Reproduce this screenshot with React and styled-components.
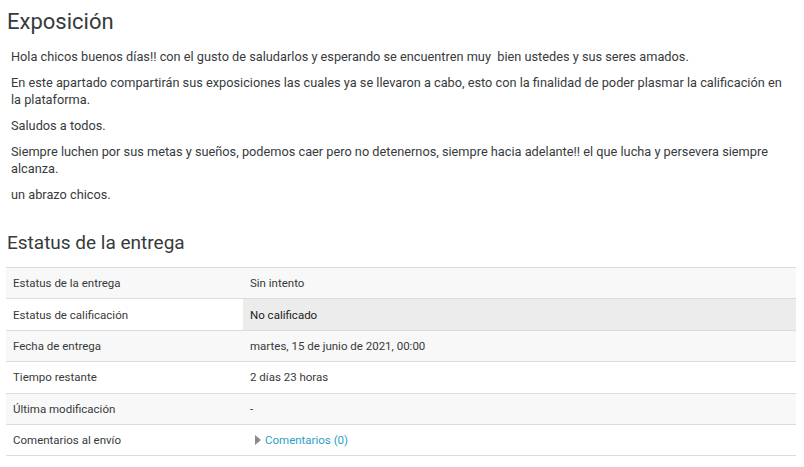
import React from "react";
import styled, { createGlobalStyle } from "styled-components";

const Global = createGlobalStyle`
  html, body { margin: 0; padding: 0; background: #fff; }
  body { font-family: Roboto, "Noto Sans", sans-serif; color: #373a3c; }
`;

const Page = styled.div`
  padding: 6px 8px 0 6px;
`;

const Title = styled.h2`
  margin: 0 0 0 1px;
  font-size: 22px;
  font-weight: 400;
  line-height: 32px;
  color: #373a3c;
`;

const Intro = styled.div`
  padding: 10px 12px 0 5px;
`;

const Para = styled.p`
  margin: 0 0 9px 0;
  font-size: 12.75px;
  line-height: 17px;
`;

const SectionTitle = styled.h3`
  margin: 27px 0 0 1px;
  font-size: 19px;
  font-weight: 400;
  line-height: 26px;
  color: #373a3c;
`;

const Table = styled.div`
  margin-top: 11px;
  width: 790px;
  display: grid;
  grid-template-columns: 237px 1fr;
  border-top: 1px solid #dcdcdc;
`;

const Cell = styled.div`
  height: 30.4px;
  display: flex;
  align-items: center;
  padding: 0 7px;
  font-size: 11.5px;
  border-bottom: 1px solid #dcdcdc;
  background: ${(p) => (p.$shade === "dark" ? "#ececec" : p.$shade === "light" ? "#f8f8f8" : "#fff")};
  color: ${(p) => (p.$strong ? "#222" : "#373a3c")};
`;

const LinkWrap = styled.span`
  display: inline-flex;
  align-items: center;
  gap: 4px;
  margin-left: 5px;
`;

const Link = styled.a`
  color: #2b9fc7;
  text-decoration: none;
  font-size: 11.5px;
`;

const rows = [
  ["Estatus de la entrega", "Sin intento", "light", "light"],
  ["Estatus de calificación", "No calificado", "white", "dark"],
  ["Fecha de entrega", "martes, 15 de junio de 2021, 00:00", "light", "light"],
  ["Tiempo restante", "2 días 23 horas", "white", "white"],
  ["Última modificación", "-", "light", "light"],
];

export default function App() {
  return (
    <Page>
      <Global />
      <Title>Exposición</Title>
      <Intro>
        <Para>
          Hola chicos buenos días!! con el gusto de saludarlos y esperando se encuentren muy&nbsp; bien ustedes y sus seres amados.
        </Para>
        <Para>
          En este apartado compartirán sus exposiciones las cuales ya se llevaron a cabo, esto con la finalidad de poder plasmar la calificación en la plataforma.
        </Para>
        <Para>Saludos a todos.</Para>
        <Para>
          Siempre luchen por sus metas y sueños, podemos caer pero no detenernos, siempre hacia adelante!! el que lucha y persevera siempre alcanza.
        </Para>
        <Para>un abrazo chicos.</Para>
      </Intro>
      <SectionTitle>Estatus de la entrega</SectionTitle>
      <Table>
        {rows.map(([label, value, ls, vs]) => (
          <React.Fragment key={label}>
            <Cell $shade={ls}>{label}</Cell>
            <Cell $shade={vs} $strong={vs === "dark"}>{value}</Cell>
          </React.Fragment>
        ))}
        <Cell $shade="white">Comentarios al envío</Cell>
        <Cell $shade="white">
          <LinkWrap>
            <svg width="6" height="10" viewBox="0 0 6 10">
              <path d="M0 0 L6 5 L0 10 Z" fill="#8a8a8a" />
            </svg>
            <Link href="#">Comentarios (0)</Link>
          </LinkWrap>
        </Cell>
      </Table>
    </Page>
  );
}
